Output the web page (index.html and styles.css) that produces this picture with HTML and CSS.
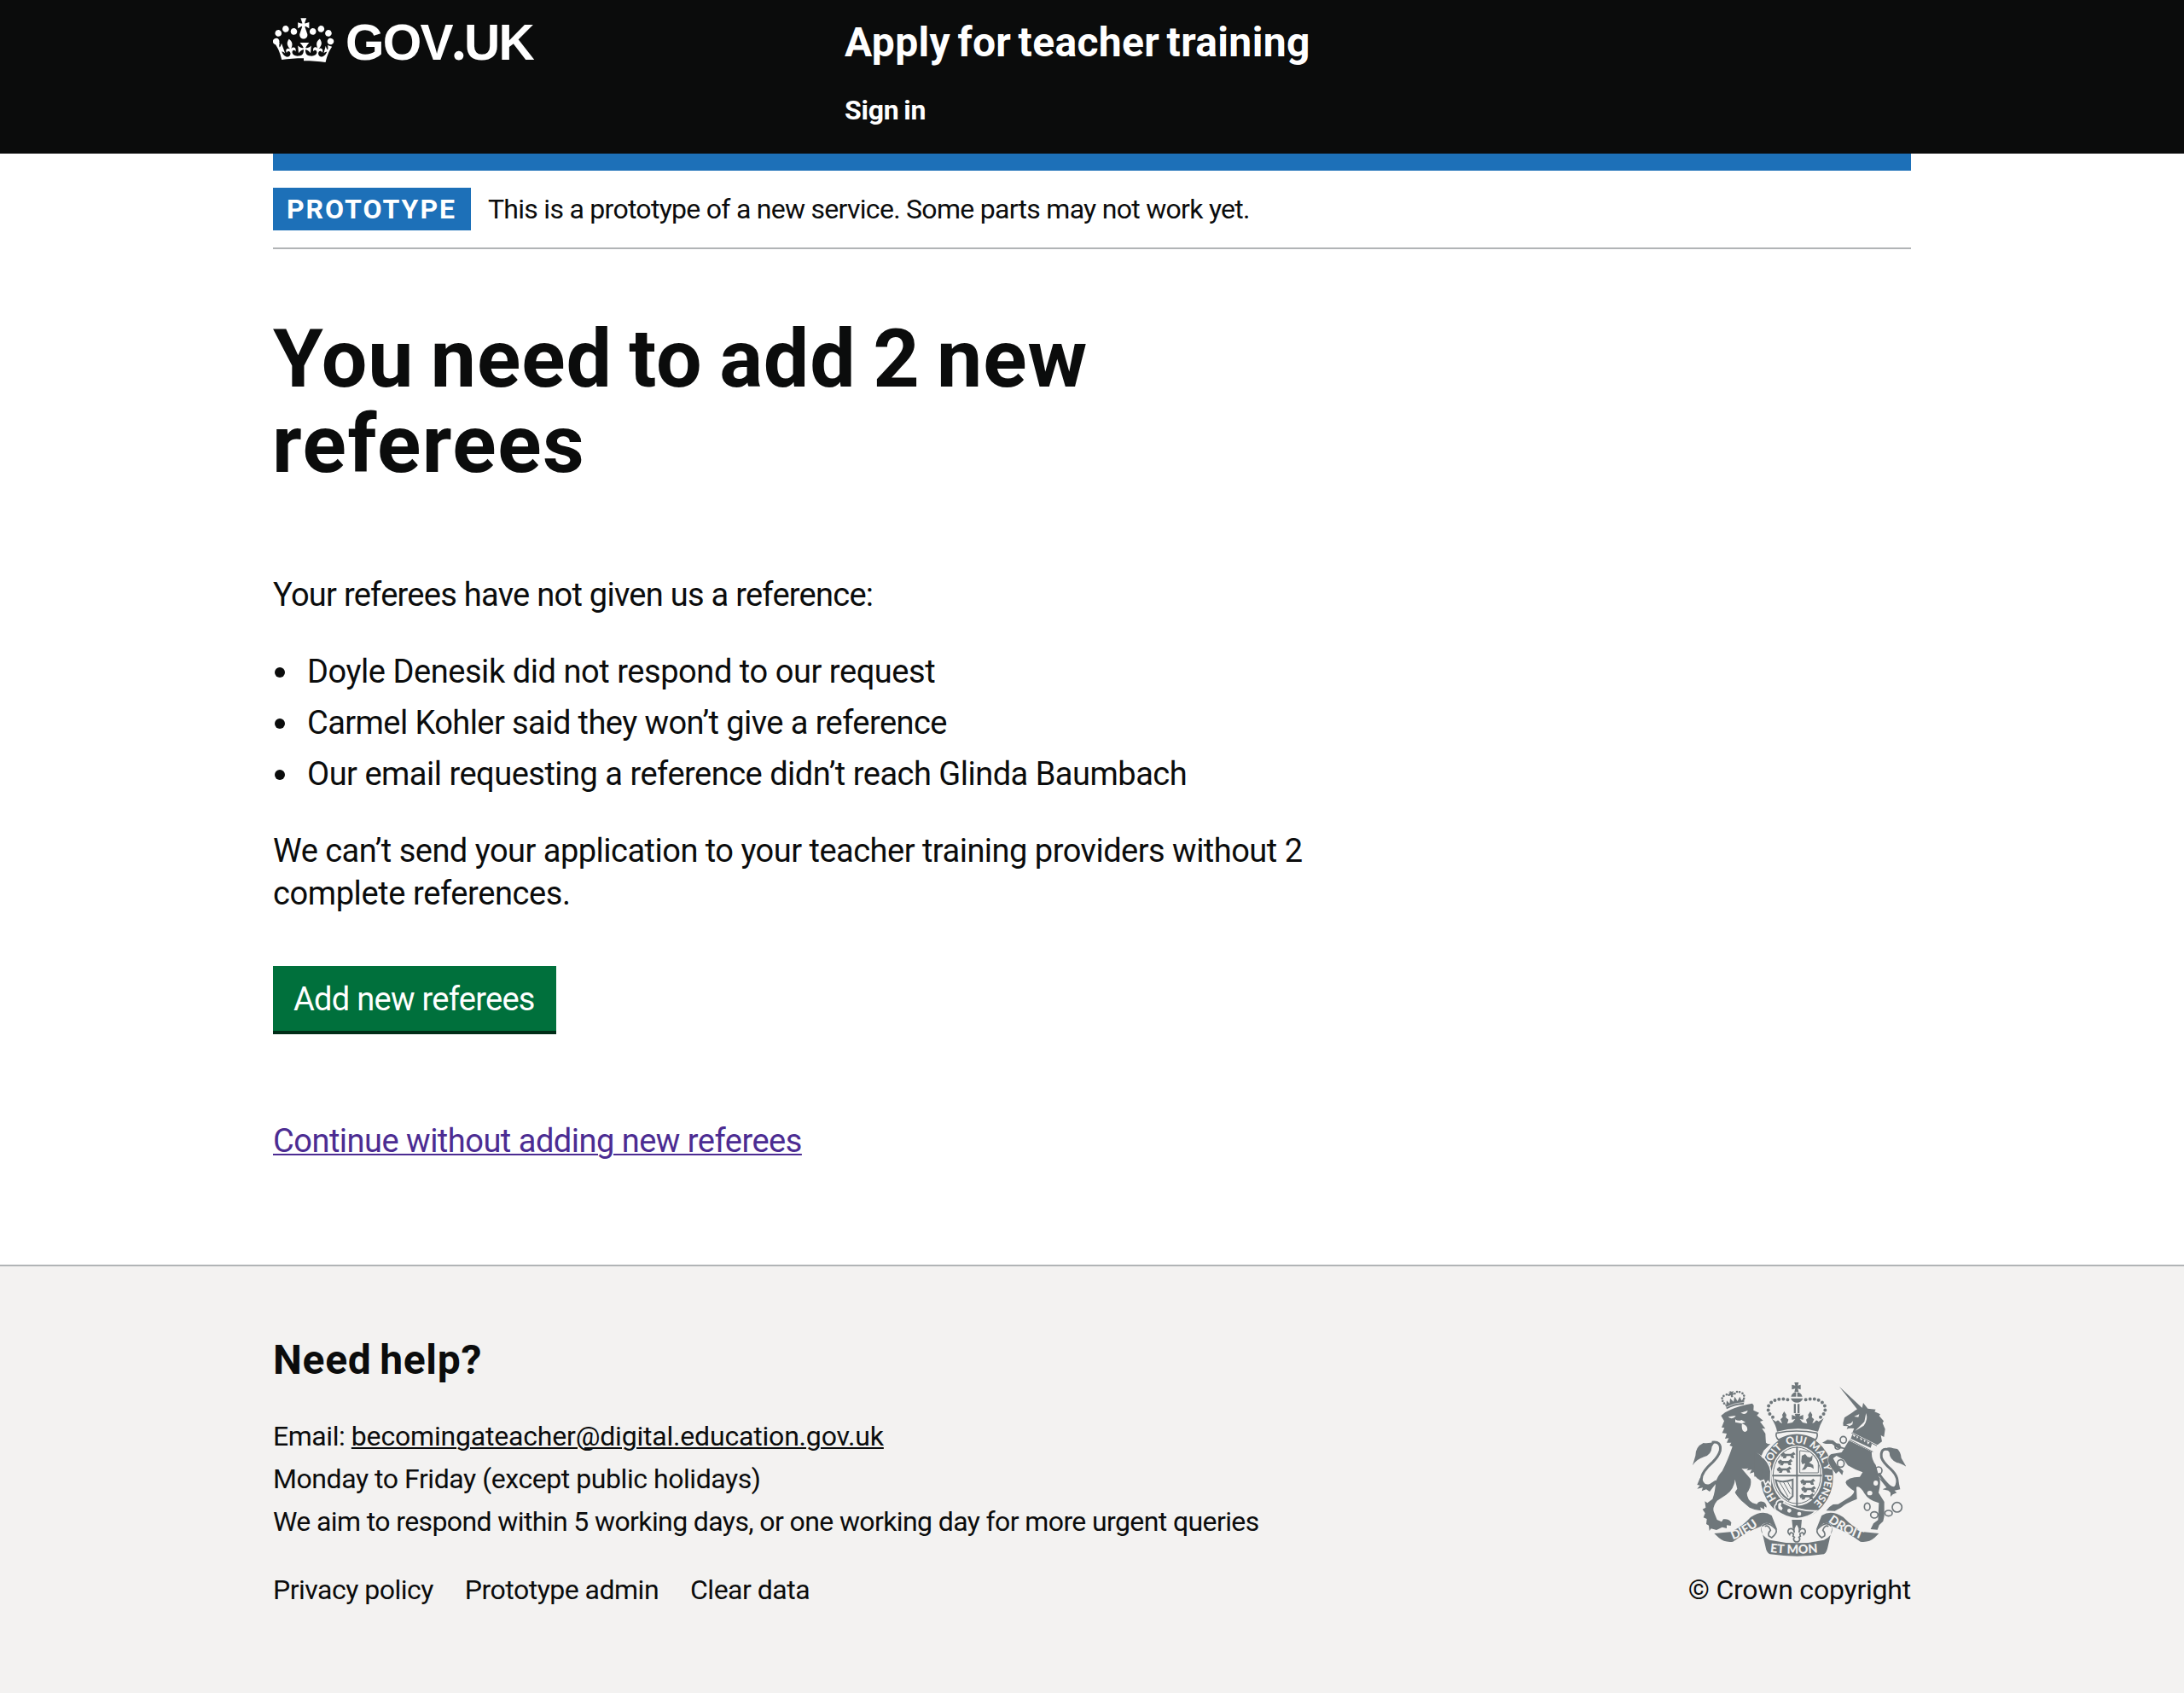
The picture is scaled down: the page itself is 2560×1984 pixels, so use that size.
FILE: index.html
```html
<!DOCTYPE html>
<html lang="en">
<head>
<meta charset="utf-8">
<title>You need to add 2 new referees - Apply for teacher training</title>
<link rel="stylesheet" href="styles.css">
</head>
<body>
<header class="header">
  <div class="container header-inner">
    <a class="logo" href="#">
      <svg class="crown" viewBox="0 0 36 32" width="72" height="64" fill="currentColor" aria-hidden="true"><path d="M6.7 12.2c1 .4 2.1-.1 2.5-1s-.1-2.1-1-2.5c-1-.4-2.1.1-2.5 1-.4 1 0 2.1 1 2.5m-4.3 2.5c1 .4 2.1-.1 2.5-1s-.1-2.1-1-2.5c-1-.4-2.1.1-2.5 1-.5 1 0 2.1 1 2.5m-1.3 4.8c1 .4 2.1-.1 2.5-1 .4-1-.1-2.1-1-2.5-1-.4-2.1.1-2.5 1-.4 1 0 2.1 1 2.5m10.4-5.8c1 .4 2.1-.1 2.5-1s-.1-2.1-1-2.5c-1-.4-2.1.1-2.5 1s0 2.1 1 2.5m17.4-1.5c-1 .4-2.1-.1-2.5-1s.1-2.1 1-2.5c1-.4 2.1.1 2.5 1 .5 1 0 2.1-1 2.5m4.3 2.5c-1 .4-2.1-.1-2.5-1s.1-2.1 1-2.5c1-.4 2.1.1 2.5 1 .5 1 0 2.1-1 2.5m1.3 4.8c-1 .4-2.1-.1-2.5-1-.4-1 .1-2.1 1-2.5 1-.4 2.1.1 2.5 1 .4 1 0 2.1-1 2.5m-10.4-5.8c-1 .4-2.1-.1-2.5-1s.1-2.1 1-2.5c1-.4 2.1.1 2.5 1s0 2.1-1 2.5m-5.3-4.9 2.4 1.3V6.5l-2.4.8c-.1-.1-.1-.2-.2-.2s1-3 1-3h-3.4l1 3c-.1.1-.2.1-.2.2-.1.1-2.4-.7-2.4-.7v3.5L17 8.8c-.1.1 0 .2.1.3l-1.4 4.2c-.1.2-.1.4-.1.7 0 1.1.8 2.1 1.9 2.2h.8c1.1-.2 1.9-1.1 1.9-2.1 0-.2 0-.4-.1-.7l-1.4-4.2c.2-.1.3-.3.3-.4m-1 20.3c4.6 0 8.9.3 12.8.9 1.1-4.6 2.4-7.2 3.8-9.1l-2.6-.9c.3 1.3.3 1.9 0 2.8-.4-.4-.8-1.2-1.1-2.4l-1.2 4.2c.8-.5 1.4-.9 2-.9-1.2 2.6-2.7 3.2-3.6 3-1.2-.2-1.7-1.3-1.5-2.2.3-1.3 1.6-1.6 2.2-.1 1.1-2.4-.8-3.1-2-2.4 1.9-1.9 2.2-3.6.6-5.7-2.2 1.7-2.2 3.3-1.2 5.6-1.3-1.5-3.3-.7-2.5 1.7.9-1.4 2.1-.5 2 .8-.2 1.2-1.7 2.1-3.7 1.9-2.8-.2-3-2.2-3-3.7.7-.1 1.9.5 3 2l.4-4.4c-1.1 1.2-2.2 1.4-3.3 1.4.4-1.2 2.1-3.1 2.1-3.1h-5.4s1.8 2 2.1 3.1c-1.1 0-2.2-.3-3.3-1.4l.4 4.4c1.1-1.5 2.3-2.1 3-2-.1 1.6-.2 3.5-3 3.7-1.9.2-3.5-.7-3.7-1.9-.2-1.3 1-2.2 1.9-.7.7-2.4-1.3-3.1-2.6-1.7 1-2.3 1-4-1.2-5.6-1.6 2.1-1.3 3.8.6 5.7-1.3-.7-3.2 0-2 2.4.6-1.5 1.9-1.1 2.2.1.2.9-.4 1.9-1.5 2.2-1 .2-2.4-.4-3.6-3 .7 0 1.2.3 2 .9L5 18.9c-.3 1.2-.7 1.9-1.1 2.4-.4-.9-.3-1.5 0-2.8l-2.6.9C2.7 21.3 4 23.9 5.1 28.5c3.9-.6 8.2-.9 12.9-.9"/></svg>
      <span class="logo-text">GOV<span class="logo-dot">.</span>UK</span>
    </a>
    <div class="header-content">
      <a class="service-name" href="#">Apply for teacher training</a>
      <nav><a class="sign-in" href="#">Sign in</a></nav>
    </div>
  </div>
</header>

<div class="container">
  <div class="phase-banner">
    <strong class="tag">PROTOTYPE</strong>
    <span class="phase-text">This is a prototype of a new service. Some parts may not work yet.</span>
  </div>

  <main class="main">
    <h1 class="title">You need to add 2 new <span class="title-last">referees</span></h1>
    <p class="intro">Your referees have not given us a reference:</p>
    <ul class="list">
      <li class="item-doyle">Doyle Denesik did not respond to our request</li>
      <li class="item-carmel">Carmel Kohler said they won’t give a reference</li>
      <li>Our email requesting a reference didn’t reach Glinda Baumbach</li>
    </ul>
    <p>We can’t send your application to your teacher training providers without 2 <span class="para-last">complete references.</span></p>
    <a class="button" href="#">Add new referees</a>
    <p class="continue"><a class="link" href="#">Continue without adding new referees</a></p>
  </main>
</div>

<footer class="footer">
  <div class="container footer-inner">
    <div>
      <h2 class="help-title">Need help?</h2>
      <ul class="help">
        <li class="help-email">Email: <a class="email" href="#">becomingateacher@digital.education.gov.uk</a></li>
        <li class="help-hours">Monday to Friday (except public holidays)</li>
        <li class="help-aim">We aim to respond within 5 working days, or one working day for more urgent queries</li>
      </ul>
      <ul class="footer-links">
        <li>Privacy policy</li>
        <li>Prototype admin</li>
        <li>Clear data</li>
      </ul>
    </div>
    <div class="copyright">
      <svg class="crest" viewBox="72 60 750 612" width="250" height="204" aria-hidden="true">
        <defs>
          <path id="garter" d="M439 506A98 116 0 0 1 341 390A98 116 0 0 1 439 274A98 116 0 0 1 537 390A98 116 0 0 1 439 506"/>
          <path id="ribbon-left" d="M214 613Q268 594 322 548"/>
          <path id="ribbon-mid" d="M344 657Q437 668 536 655"/>
          <path id="ribbon-right" d="M548 549Q602 592 672 614"/>
          <g id="passant"><path class="beast" d="M0 6l7-6 6 5h22l8-6 4 5-7 3 3 9h-6l-4-7H18l-4 8H8l3-9-8 4z"/></g>
        </defs>

        <!-- lion's crown -->
        <g class="ink">
          <path d="M184 132l8 22q28-16 60-16l2-24-10 10-6-14-8 16-10-16-4 18-12-12-2 18-10-10-2 16z"/>
          <path d="M202 90l8 3 6-3-2 8 6 3-7 3 2 8h-8l-1-7-7 1 3-7-4-5 6 1z"/>
          <path class="beads" d="M183 134Q168 114 184 106T200 106M249 126Q260 104 243 96T220 100"/>
        </g>
        <path class="hairline" d="M188 148q30-16 64-18"/>

        <!-- lion -->
        <path class="ink" d="M172 177L186 166Q222 146 262 138L282 134L287 141L286 158L306 167L298 176L320 194L309 198L328 223L316 222L328 240Q329 262 330 272Q338 278 346 276L322 300L314 318L332 336L346 368L347 416L338 402L336 418L324 404L318 416L310 400L299 397L303 384L290 392L288 376L273 380L280 367L262 370L268 362Q254 366 244 362L276 400Q281 425 263 449Q264 472 283 484L298 488Q306 474 321 480Q333 486 332 500L324 495L324 506L310 499L312 511Q293 510 272 500L244 476Q225 456 221 446L229 434L221 401Q218 436 190 455L158 476Q140 500 147 516L158 543L174 550L180 541Q200 538 208 553L206 564L192 562L192 573L176 569L156 579L137 574L131 582L129 563L120 558L122 540L110 535L116 520L107 506L118 500L115 478L124 484L142 470Q152 444 153 412Q158 391 176 372Q196 334 212 286L202 282L208 272L192 272L199 256L186 258L192 240L176 238L184 220L174 218L183 196Z"/>
        <path class="paper" d="M197 181l27-4q-4 8-15 10-8-2-12-6zM241 167l25-8q-3 12-14 12zM222 190q10 8 22 2l14 8-14 5q24 6 20 24-8 10-16 0-5-12-2-24l-24-5z"/>
        <path class="tail" d="M140 271Q174 266 169 300Q163 320 143 340Q102 376 103 402Q105 428 136 422L160 407"/>
        <path class="ink" d="M152 267Q130 276 110 273Q82 286 82 318L72 352Q86 330 112 322Q138 316 140 286ZM98 396L88 420 98 422 88 434 108 430 104 442 120 436 132 444 160 408 152 404 122 424Z"/>

        <!-- imperial crown -->
        <g class="ink">
          <path d="M430 60h15l-3 11 10-3v17l-10-3 3 11h-15l3-11-12 3V68l12 3zM418 110q4-14 18-16v16zM440 94q14 3 18 16h-18zM417 116h43q-6 15-21 15t-22-15zM428 136h7v32h-7zM441 136h7v32h-7z"/>
          <path class="beads big" d="M354 182C334 168 334 144 345 134C362 114 398 116 414 124M522 182C542 168 542 144 531 134C516 114 478 116 462 124"/>
          <path d="M347 186l18 12q8-10 14 2l8 4-6-14 8-8-2-8 7-12 8 12-2 9 9 8-4 14 18-4 10-12-12 2v-17l13 5-3-9h20l-3 9 13-5v17l-12-2 10 12 16 4-4-14 9-8-2-9 8-12 7 12-2 8 8 8-6 14 8-4q6-12 14-2l18-12q-14 24-20 47-68-20-144 0-3-21-20-47z"/>
        </g>

        <!-- garter and shield -->
        <ellipse class="garter-rim" cx="439" cy="391" rx="130" ry="149"/>
        <path class="collar" d="M367 238Q438 224 509 238Q514 250 504 262Q438 226 374 262Q362 250 367 238Z"/>
        <ellipse class="paper" cx="439" cy="388" rx="90" ry="106"/>
        <ellipse class="line" cx="439" cy="387" rx="84" ry="99"/>
        <path class="line thick" d="M439 286V498M352 388H527"/>
        <g class="ink">
          <use href="#passant" x="384" y="308"/><use href="#passant" x="374" y="333"/><use href="#passant" x="370" y="359"/>
          <use href="#passant" x="453" y="402"/><use href="#passant" x="456" y="428"/><use href="#passant" x="450" y="453"/>
          <path d="M456 318l12-6 8 10 10 2 8-8-2 18-10 8 14 8 2 14-10-6-12-2-8 10-12 2 8-12 4-12-10 4-4-10z"/>
        </g>
        <path class="line" d="M449 300V378H514V340Q506 318 484 304Z"/>
        <path class="line thick" d="M364 404Q388 414 424 402V460L410 473Q374 450 364 404Z"/>
        <path class="line" d="M378 411L408 462M392 411L415 452M406 409L420 436"/>
        <path class="belt" d="M392 484Q446 514 508 512Q440 566 364 510Q356 494 366 488Q366 474 384 472Q400 476 392 484Z"/>
        <path class="paper" d="M373 488q4-8 12-4l-3 10 7 8-4 8q-9 0-12-8z"/>
        <circle class="paper" cx="412" cy="511" r="7"/><circle class="paper" cx="447" cy="522" r="7"/>
        <g class="motto garter-text">
          <text><textPath href="#garter" startOffset="12.4%">HO</textPath></text>
          <text><textPath href="#garter" startOffset="29.7%">SOIT</textPath></text>
          <text><textPath href="#garter" startOffset="44.6%">QUI</textPath></text>
          <text><textPath href="#garter" startOffset="56.4%">MAL</textPath></text>
          <text><textPath href="#garter" startOffset="68.8%">Y</textPath></text>
          <text><textPath href="#garter" startOffset="74%">PENSE</textPath></text>
        </g>
        <!-- lion's forepaw over the garter -->
        <path class="paw" d="M300 312L324 326Q352 356 347 388L346 420L337 408L328 420L322 404L310 408L299 397L303 384Z"/>
        <path class="ink" d="M290 300L312 318L324 340L310 404L299 397L290 388Z"/>

        <!-- unicorn -->
        <path class="ink" d="M588 75L671 152L655 160ZM601 203L606 184L634 166Q652 150 668 150L672 132L688 152L716 155L712 163L732 172L728 178L744 196L740 203L749 224L745 252L734 246L738 268L722 280L634 236L640 222Q622 220 614 224L618 214L602 213Z"/>
        <path class="paper" d="M640 180l18-8-3 10zM612 208l16-4 8-8-2 12-10 6zM682 168Q690 190 674 212L644 230Q666 208 676 198Z"/>
        <path class="ink cutout" d="M622 264L702 304Q700 330 716 350L730 400Q734 420 726 448L746 480L746 530L742 548L728 562L722 578L698 576L708 556L724 544L727 484Q690 474 676 450Q660 422 648 428L650 470Q612 484 594 500L572 512L542 511Q552 496 566 489L584 488L626 462Q640 452 640 442Q614 426 610 412Q618 392 660 392L670 376Q640 366 618 352L604 332L578 318L566 327L580 352L602 372L598 386L586 372L576 381L560 360L550 342Q546 318 560 312L596 306L604 294L580 290L562 276L540 276L528 272L546 262L566 264L590 284L606 290Z"/>
        <path class="paper" d="M632 236L722 283L708 306L622 264Z"/>
        <path class="line" d="M631 238L720 283M624 262L706 304"/>
        <path class="ink" d="M628 258l6-16 6 10 8-8 2 14 8-10 6 16 8-8 4 14 8-8 4 16 10-10 4 10-4 12z"/>
        <path class="tail" d="M760 296Q732 288 736 324Q742 342 768 364Q804 398 786 428Q770 444 726 380"/>
        <path class="ink" d="M752 292Q762 286 778 292L792 294Q804 304 806 326L823 356Q804 344 790 342Q764 330 764 306ZM724 392L754 430 740 436 760 440 768 448 768 462 776 454 790 448 782 440 802 436 796 408 782 430 766 424Z"/>
        <g class="chain"><ellipse cx="602" cy="262" rx="11" ry="12"/><ellipse cx="582" cy="286" rx="9" ry="9"/><ellipse cx="593" cy="345" rx="12" ry="13"/><ellipse cx="726" cy="370" rx="12" ry="13"/><ellipse cx="686" cy="497" rx="10" ry="13"/><ellipse cx="711" cy="526" rx="13" ry="11"/><ellipse cx="761" cy="520" rx="13" ry="10"/><circle cx="791" cy="499" r="17"/></g>
        <g class="paper"><ellipse cx="716" cy="414" rx="8" ry="9"/><ellipse cx="695" cy="449" rx="9" ry="8"/></g>

        <!-- ribbon -->
        <path class="ink" d="M148 591L204 586Q244 570 276 534Q318 506 350 528L370 578L344 556Q322 550 312 566Q256 588 214 620Q184 624 164 606ZM727 591L674 586Q636 570 602 534Q560 506 526 528L506 578L532 556Q554 550 564 566Q620 588 662 620Q692 624 712 606Z"/>
        <path class="curl" d="M316 566Q330 550 348 562Q362 572 366 578Q370 590 350 606L340 600Q336 590 346 580Q340 560 326 566M560 566Q546 550 528 562Q514 572 510 578Q506 590 526 606L536 600Q540 590 530 580Q536 560 550 566"/>
        <path class="ink" d="M312 566Q310 600 344 614Q440 636 534 614Q566 600 564 566L548 636Q544 658 534 664Q440 678 344 664Q332 660 328 636Z"/>

        <!-- fleur-de-lis -->
        <path class="ink" d="M421 543h35l-3 30h-29z"/>
        <path class="fleur" d="M438 556q14 16 8 32 4-18 18-13 10 10-1 20-3-12-14-2l2 8-5 3q6 7 0 14-8 6-16 0-6-7 0-14l-5-3 2-8q-11-10-14 2-11-10-1-20 14-5 18 13-6-16 8-32z"/>

        <g class="motto ribbon-text">
          <text><textPath href="#ribbon-left">DIEU</textPath></text>
          <text><textPath href="#ribbon-mid">ET MON</textPath></text>
          <text><textPath href="#ribbon-right">DROIT</textPath></text>
        </g>
      </svg>
      <span>© Crown copyright</span>
    </div>
  </div>
</footer>
</body>
</html>
```
FILE: styles.css
```css
* { box-sizing: border-box; }

body {
  margin: 0;
  min-height: 1984px;
  display: flex;
  flex-direction: column;
  background: #fff;
  color: #0b0c0c;
  font-family: Roboto, "Noto Sans", sans-serif;
  font-size: 38px;
  line-height: 50px;
}

h1, h2, p, ul { margin: 0; padding: 0; font-size: inherit; }
ul { list-style: none; }
a { color: inherit; text-decoration: none; }

.container { width: 1920px; margin: 0 auto; }

/* Header */
.header { height: 180px; background: #0b0c0c; color: #fff; }
.header-inner { display: flex; }
.logo { display: flex; width: 670px; gap: 13px; }
.crown { display: block; margin-top: 13px; }
.logo-text {
  margin-top: 20px;
  font: bold 58.5px/60px "Liberation Sans", sans-serif;
  letter-spacing: -1.7px;
}
.logo-dot { font-family: Lato, sans-serif; font-weight: 900; font-size: 66px; line-height: 40px; }
.header-content { padding-top: 20px; }
.service-name { display: block; font-weight: 700; font-size: 48px; line-height: 60px; letter-spacing: .35px; word-spacing: -4px; }
.sign-in { display: block; margin-top: 29px; font-weight: 700; font-size: 32px; line-height: 40px; letter-spacing: -.2px; word-spacing: -2px; }

/* Phase banner */
.phase-banner {
  display: flex;
  align-items: center;
  gap: 20px;
  height: 112px;
  border-top: 20px solid #1d70b8;
  border-bottom: 2px solid #b1b4b6;
  font-size: 32px;
  line-height: 40px;
}
.tag { width: 232px; padding: 5px 16px; background: #1d70b8; color: #fff; letter-spacing: 1.99px; }
.phase-text { letter-spacing: -.72px; }

/* Content */
.main { width: 1260px; padding-top: 79px; letter-spacing: -.51px; }
.title { width: 1100px; font-size: 95px; line-height: 100px; margin-bottom: 101px; letter-spacing: .9px; word-spacing: -5px; }
.title-last { letter-spacing: 1.6px; margin-left: -1px; }
.intro { letter-spacing: -.73px; }
.list { padding: 40px 0 40px 40px; display: grid; gap: 10px; }
.list li { position: relative; letter-spacing: -.5px; }
.list li::before {
  content: "";
  position: absolute;
  left: -38px;
  top: 20px;
  width: 12px;
  height: 12px;
  border-radius: 50%;
  background: #0b0c0c;
}
.list .item-doyle { letter-spacing: -.44px; }
.list .item-carmel { letter-spacing: -.57px; }
.para-last { letter-spacing: -.4px; }
.button {
  display: block;
  width: 332px;
  margin-top: 60px;
  padding: 14px 24px 12px;
  background: #00703c;
  box-shadow: 0 4px 0 #002d18;
  color: #fff;
  letter-spacing: -.72px;
  white-space: nowrap;
}
.continue { margin-top: 104px; letter-spacing: -.5px; }
.link { color: #4c2c92; text-decoration: underline; text-decoration-thickness: 2px; text-underline-offset: 2px; }

/* Footer */
.footer {
  flex: 1;
  margin-top: 120px;
  padding-top: 80px;
  border-top: 2px solid #b1b4b6;
  background: #f3f2f1;
  font-size: 32px;
}
.footer-inner { display: flex; justify-content: space-between; }
.help-title { font-size: 48px; line-height: 60px; letter-spacing: .7px; word-spacing: -3px; margin-bottom: 34px; }
.help-email { letter-spacing: -.44px; }
.email { letter-spacing: -.19px; text-decoration: underline; text-decoration-thickness: 2px; text-underline-offset: 2px; }
.help-hours { letter-spacing: -.44px; }
.help-aim { letter-spacing: -.61px; }
.footer-links { display: flex; gap: 37px; margin-top: 35px; line-height: 40px; letter-spacing: -.51px; }
.copyright {
  display: flex;
  flex-direction: column;
  align-items: flex-end;
  padding-top: 56px;
  line-height: 40px;
  letter-spacing: -.22px;
}
.crest { display: block; margin: 0 6px 19px 0; }

/* Coat of arms */
.ink { fill: #6f777b; }
.paper { fill: #f3f2f1; }
.line { fill: none; stroke: #6f777b; stroke-width: 3; }
.thick { stroke-width: 6; }
.hairline { fill: none; stroke: #f3f2f1; stroke-width: 2; }
.beast { stroke: #6f777b; stroke-width: 4; }
.cutout, .paw, .belt, .garter-rim { fill: #6f777b; stroke: #f3f2f1; stroke-width: 5; }
.cutout { stroke-width: 3; paint-order: stroke; }
.collar, .curl, .fleur { fill: #f3f2f1; stroke: #6f777b; stroke-width: 5; }
.tail { fill: none; stroke: #6f777b; stroke-width: 9; }
.beads { fill: none; stroke: #6f777b; stroke-width: 8; stroke-linecap: round; stroke-dasharray: 0 10; }
.big { stroke-width: 12; stroke-dasharray: 0 15; }
.chain { fill: none; stroke: #6f777b; stroke-width: 5; }
.motto { font-family: Lato, sans-serif; font-weight: 900; letter-spacing: 0; fill: #f3f2f1; }
.garter-text { font-size: 36px; }
.ribbon-text { font-size: 43px; }
```
